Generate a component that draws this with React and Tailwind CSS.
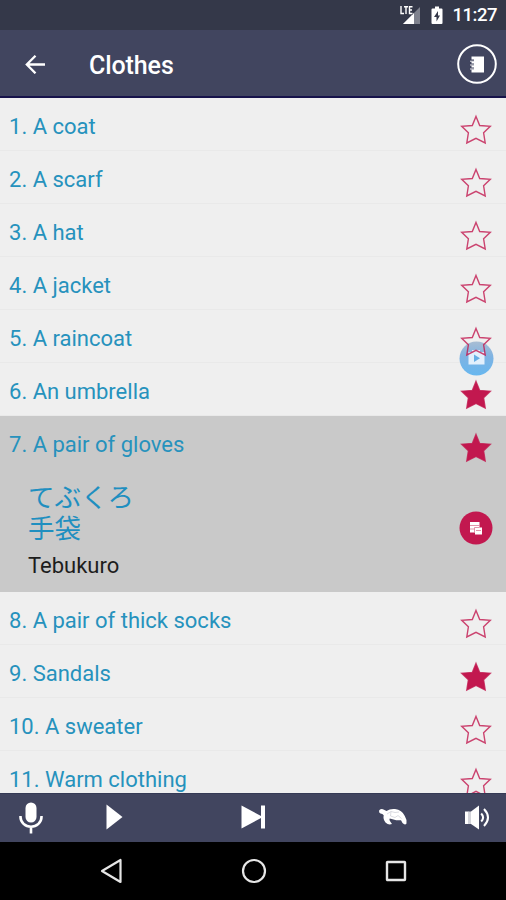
import React from 'react';

const words = [
  { id: 1, label: 'A coat' },
  { id: 2, label: 'A scarf' },
  { id: 3, label: 'A hat' },
  { id: 4, label: 'A jacket' },
  { id: 5, label: 'A raincoat' },
  { id: 6, label: 'An umbrella', starred: true },
  {
    id: 7,
    label: 'A pair of gloves',
    starred: true,
    open: { japanese: 'てぶくろ\n手袋', romaji: 'Tebukuro' },
  },
  { id: 8, label: 'A pair of thick socks' },
  { id: 9, label: 'Sandals', starred: true },
  { id: 10, label: 'A sweater' },
  { id: 11, label: 'Warm clothing' },
];

function Star({ filled }) {
  return (
    <svg
      width="32"
      height="31"
      viewBox="0 0 32 31"
      className={`relative z-10 shrink-0 ${filled ? 'fill-[#c2184f]' : 'fill-none'}`}
    >
      <path
        d="M16 2.4 L19.7 11.5 L30.3 12.3 L23.6 18.8 L25.2 29 L16 24.4 L6.8 29 L8.4 18.8 L1.7 12.3 L12.3 11.5 Z"
        stroke="#c2184f"
        strokeOpacity="0.8"
        strokeWidth="1.4"
      />
    </svg>
  );
}

function StatusBar() {
  return (
    <div className="flex h-[30px] shrink-0 items-center justify-end bg-[#343849] pt-px pr-[9px] text-white">
      <svg width="22" height="20" viewBox="0 0 22 20" className="mt-[-2px] mr-[10px]">
        <path d="M21 2 V19 H4 Z" fill="#7f828e" />
        <path d="M15 8 V19 H4 Z" fill="#fff" />
        <path d="M0 0 H14 V9.5 H0 Z" fill="#343849" />
        <path d="M2 1 V8.5 H5 M5 1.7 H9 M7 1.7 V9 M13.5 1.7 H10.5 V8.5 H13.5 M10.5 5 H13" fill="none" stroke="#fff" strokeWidth="1.4" />
      </svg>
      <svg width="12" height="19" viewBox="0 0 12 19" className="mt-[-1px] mr-[10px]">
        <path d="M4 0.5 H8 V2.5 H10.5 Q11.5 2.5 11.5 3.5 V17 Q11.5 18 10.5 18 H1.5 Q0.5 18 0.5 17 V3.5 Q0.5 2.5 1.5 2.5 H4 Z" fill="#fff" />
        <path d="M7 5 L3 11 H5.5 V15.5 L9 9.5 H7 Z" fill="#343849" />
      </svg>
      <span className="text-[18.5px] leading-none font-medium tracking-[-0.5px]">11:27</span>
    </div>
  );
}

function Header() {
  return (
    <header className="flex h-[68px] shrink-0 items-center border-b-2 border-[#17134a] bg-[#41455f] pt-[2px] pr-[9px] pl-[25px] text-white">
      <svg width="21" height="20" viewBox="0 0 21 20" fill="none" stroke="#fff" strokeWidth="2.3">
        <path d="M20 10.5 H2 M10.5 1.7 L1.8 10.5 L10.5 19.3" />
      </svg>
      <h1 className="mt-[3px] ml-[43px] grow text-[25px] leading-none font-medium tracking-[-0.1px]">Clothes</h1>
      <svg width="40" height="40" viewBox="0 0 40 40">
        <circle cx="20" cy="20" r="18.8" fill="none" stroke="#fff" strokeWidth="2" />
        <path d="M14.5 12.5 H27 V28.5 H14.5 Z" fill="#fff" />
        <path d="M12 16.5 H17 M12 20.5 H17 M12 24.5 H17" stroke="#41455f" strokeWidth="2.2" />
        <path d="M13 17.2 H17 M13 21 H17 M13 25 H17" stroke="#fff" strokeWidth="0.9" />
      </svg>
    </header>
  );
}

function WordRow({ word }) {
  const { id, label, starred, open } = word;

  return (
    <li className={open ? 'h-[176px] bg-[#c9c9c9]' : 'h-[53px] border-b border-[#e9e9e9]'}>
      <div className="flex h-[53px] items-start justify-between pr-[14px] pl-[9px]">
        <span className="pt-[15px] text-[22px] leading-[28px] text-[#2692bd]">
          {id}. {label}
        </span>
        <div className="pt-[16px]">
          <Star filled={starred} />
        </div>
      </div>
      {open && (
        <div className="flex items-start justify-between pr-[13px] pl-[28px]">
          <div className="pt-[11px]">
            <div className="font-['Noto_Sans_CJK_JP',sans-serif] text-[26.5px] leading-[31px] whitespace-pre-line text-[#1f8fc0]">
              {open.japanese}
            </div>
            <div className="mt-[10px] text-[22px] leading-[28px] text-[#1d1d1d]">
              {open.romaji}
            </div>
          </div>
          <div className="pt-[42px]">
            <svg width="34" height="34" viewBox="0 0 34 34">
              <circle cx="17" cy="17" r="16.5" fill="#c2184f" />
              <path d="M11 11 H20.5 V16.5 H23 V23.5 H16 V21.5 H11 Z" fill="#fff" />
              <path d="M11 14.5 H20.5 M11 18 H15.5 M15.5 22 V16.5 H20.5 M17 19.5 H22" fill="none" stroke="#dc7896" strokeWidth="0.8" />
            </svg>
          </div>
        </div>
      )}
    </li>
  );
}

function VideoButton() {
  return (
    <svg width="35" height="35" viewBox="0 0 35 35" className="absolute top-[243px] right-[12.5px]">
      <defs>
        <linearGradient id="video" x1="0" y1="0" x2="0" y2="1">
          <stop offset="0" stopColor="#a9bdd3" />
          <stop offset="0.45" stopColor="#7eb3e3" />
          <stop offset="1" stopColor="#67b7ef" />
        </linearGradient>
      </defs>
      <circle cx="17.5" cy="17.5" r="17" fill="url(#video)" />
      <path d="M9.5 11 H13 V9 H21 V11 H25.5 V23.5 H9.5 Z" fill="#e3f0fc" />
      <path d="M15 13.5 L21 17.2 L15 20.9 Z" fill="#67aee5" />
    </svg>
  );
}

function Player() {
  return (
    <div className="flex h-[49px] shrink-0 items-center border-t border-[#353a55] bg-[#41455f] pl-[19px]">
      <svg width="24" height="32" viewBox="0 0 24 32" className="mt-[-1px]">
        <rect x="6.5" y="0.5" width="11" height="20" rx="5.5" fill="#fff" />
        <path d="M1.5 14 V15 A10.5 9.7 0 0 0 22.5 15 V14 M12 25 V31.5" fill="none" stroke="#fff" strokeWidth="2.6" />
      </svg>
      <svg width="17" height="26" viewBox="0 0 17 26" className="mt-[-2px] ml-[63px]">
        <path d="M0.5 0.5 L16.5 13 L0.5 25.5 Z" fill="#fff" />
      </svg>
      <svg width="25" height="24" viewBox="0 0 25 24" className="mt-[-2px] ml-[118px]">
        <path d="M0.5 0.5 L20 11 V0.5 H24 V23.5 H20 V13 L0.5 23.5 Z" fill="#fff" />
      </svg>
      <svg width="30" height="18" viewBox="0 0 30 18" className="mt-[-2px] ml-[112px]">
        <path
          d="M1.2 2.2 Q3.5 0 6 1.8 L8.5 3 Q12 0.5 17 1 Q24 1.8 26.8 8 Q29.2 12 28.5 15.5 Q27 17.5 24.5 15 L23 12.2 Q19 12.6 15.5 11.4 L11.8 10.6 Q10.5 12 14 16 Q10.5 17.4 7.5 14.5 Q4.8 11 5.7 7.2 Q4.5 5.6 2.5 5.5 Q0.3 4.4 1.2 2.2 Z"
          fill="#fff"
        />
        <path d="M9 6 L13 3.5 L17 4.5 L21 4 M13 3.5 L12.5 8 L17 9.5 L20 7.5 L23.5 10.5" fill="none" stroke="#c3c5ce" strokeWidth="0.6" />
      </svg>
      <svg width="26" height="25" viewBox="0 0 26 25" className="mt-[-2px] ml-[56px]">
        <path d="M1 6.5 H4.5 V19 H1 Z" fill="#fff" />
        <path d="M4 6.5 H7 V19 H4 Z" fill="#d3d4da" />
        <path d="M7 6.5 L15 0.5 V24.5 L7 19 Z" fill="#fff" />
        <path d="M17.2 8.5 Q21 12.5 17.2 16.5 M20 4 Q28 12.5 20 21" fill="none" stroke="#fff" strokeWidth="2" />
      </svg>
    </div>
  );
}

function NavBar() {
  return (
    <nav className="flex h-[58px] shrink-0 items-center bg-black pl-[100px]">
      <svg width="22" height="26" viewBox="0 0 22 26" fill="none" stroke="#e6e6e6" strokeWidth="2.2" strokeLinejoin="round">
        <path d="M20.5 2 V24 L2 13 Z" />
      </svg>
      <svg width="26" height="26" viewBox="0 0 26 26" className="ml-[118.5px]">
        <circle cx="13" cy="13" r="11" fill="none" stroke="#e6e6e6" strokeWidth="2.2" />
      </svg>
      <svg width="22" height="22" viewBox="0 0 22 22" className="ml-[118.5px]">
        <rect x="2" y="2" width="18" height="18" rx="0.5" fill="none" stroke="#e6e6e6" strokeWidth="2.4" />
      </svg>
    </nav>
  );
}

export default function App() {
  return (
    <div className="flex h-[900px] w-[506px] flex-col overflow-hidden bg-[#efefef] font-[Roboto,sans-serif]">
      <StatusBar />
      <Header />
      <main className="relative min-h-0 grow overflow-hidden">
        <VideoButton />
        <ul>
          {words.map((word) => (
            <WordRow key={word.id} word={word} />
          ))}
        </ul>
      </main>
      <Player />
      <NavBar />
    </div>
  );
}
